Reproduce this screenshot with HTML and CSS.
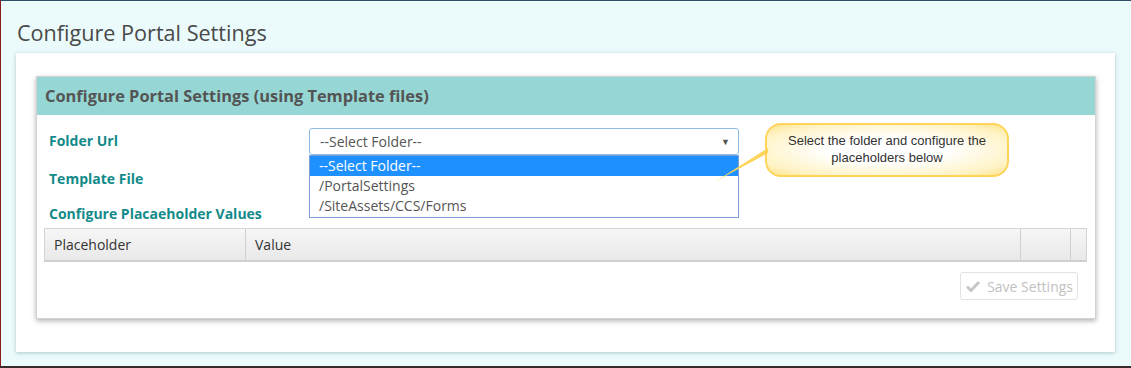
FILE: index.html
```html
<!DOCTYPE html>
<html>
<head>
	<title>Configure Portal Settings</title>
	<link rel="stylesheet" href="styles.css">
</head>
<body>
	<div class="screen">
		<h1 class="page-title">Configure Portal Settings</h1>

		<div class="card">
			<div class="panel">
				<div class="panel-head">Configure Portal Settings (using Template files)</div>
				<div class="panel-body">

					<div class="field">
						<label class="field-label">Folder Url</label>
						<div class="select-wrap">
							<div class="select">
								<span>--Select Folder--</span>
								<span class="caret">&#9660;</span>
							</div>
							<ul class="options">
								<li class="active">--Select Folder--</li>
								<li>/PortalSettings</li>
								<li>/SiteAssets/CCS/Forms</li>
							</ul>
						</div>
					</div>

					<div class="field">
						<label class="field-label">Template File</label>
					</div>

					<div class="section-label">Configure Placaeholder Values</div>

					<div class="grid-head">
						<div class="col col-name">Placeholder</div>
						<div class="col col-value">Value</div>
						<div class="col col-act"></div>
						<div class="col col-last"></div>
					</div>

					<div class="actions">
						<button class="btn" disabled>
							<svg width="14" height="12" viewBox="0 0 14 12"><path d="M1 6.5 L5 10.5 L13 2" fill="none" stroke="#c8c8c8" stroke-width="3"/></svg>
							Save Settings
						</button>
					</div>
				</div>

				<div class="callout">
					<svg class="callout-tail" width="54" height="36" viewBox="0 0 54 36"><path d="M52 2 L0 35 L52 7 Z" fill="#ffd45a"/></svg>
					Select the folder and configure the<br>placeholders below
				</div>
			</div>
		</div>
	</div>
</body>
</html>
```

FILE: styles.css
```css
body{
	margin: 0;
	background: #3a2a2a;
	font-family: "Open Sans", "Noto Sans", sans-serif;
}

.screen{
	height: 365px;
	background: #ebfbfc;
	border-left: 1px solid #8d1c1c;
	border-top: 1px solid #2d4f66;
	overflow: hidden;
}

.page-title{
	margin: 0;
	padding: 16px 0 0 16px;
	font-size: 21.6px;
	font-weight: normal;
	line-height: 32px;
	color: #4a4a4a;
}

.card{
	margin: 4px 0 0 15px;
	width: 1060px;
	height: 276px;
	padding: 23px 19px 0 20px;
	background: #fff;
	box-shadow: 0 1px 4px rgba(60,100,110,.35);
}

.panel{
	position: relative;
	height: 241px;
	border: 1px solid #d2d2d2;
	box-shadow: 0 2px 5px rgba(0,0,0,.3);
}

.panel-head{
	height: 38px;
	padding: 0 8px;
	background: #96d7d5;
	font-size: 16.4px;
	font-weight: bold;
	line-height: 38px;
	color: #545454;
}

.panel-body{
	padding: 12px 8px 0 7px;
}

.field{
	display: grid;
	grid-template-columns: 265px 430px;
	align-items: center;
	height: 27px;
	margin-bottom: 11px;
}

.field-label,
.section-label{
	padding-left: 5px;
	font-size: 14px;
	font-weight: bold;
	color: #138a8a;
}

.section-label{
	height: 22px;
	line-height: 22px;
	margin-top: 1px;
}

.select-wrap{
	position: relative;
	top: 1px;
	height: 27px;
}

.select{
	display: flex;
	justify-content: space-between;
	align-items: center;
	height: 25px;
	padding: 0 8px 0 10px;
	border: 1px solid #8cbbe8;
	border-radius: 3px;
	font-size: 14px;
	color: #555;
}

.caret{
	font-size: 9px;
	color: #555;
}

.options{
	position: absolute;
	top: 27px;
	left: 0;
	right: 0;
	margin: 0;
	padding: 0 0 1px;
	list-style: none;
	background: #fff;
	border: 1px solid #7f9fd6;
	z-index: 2;
}

.options li{
	height: 20px;
	padding-left: 9px;
	font-size: 14px;
	line-height: 20px;
	color: #555;
}

.options li.active{
	background: #1e90ff;
	color: #fff;
}

.grid-head{
	display: flex;
	height: 31px;
	margin-top: 3px;
	border: 1px solid #d4d4d4;
	border-bottom: 2px solid #cfcfcf;
	background: linear-gradient(#f6f6f6, #e9e9e9);
	font-size: 14px;
	color: #333;
}

.col{
	border-left: 1px solid #d0d0d0;
	line-height: 31px;
	padding-left: 9px;
}

.col-name{
	width: 191px;
	border-left: 0;
}

.col-value{
	width: 765px;
}

.col-act{
	width: 40px;
}

.col-last{
	flex: 1;
}

.actions{
	display: flex;
	justify-content: flex-end;
	padding: 10px 9px 0 0;
}

.btn{
	display: flex;
	align-items: center;
	gap: 7px;
	height: 28px;
	padding: 0 4px 0 5px;
	background: #fff;
	border: 1px solid #e2e2e2;
	border-radius: 3px;
	font-family: "Open Sans", "Noto Sans", sans-serif;
	font-size: 14px;
	color: #c2c2c2;
}

.callout{
	position: absolute;
	left: 728px;
	top: 46px;
	width: 244px;
	height: 54px;
	padding-top: 7px;
	box-sizing: border-box;
	border: 2px solid #ffd45a;
	border-radius: 16px;
	background: radial-gradient(ellipse at center, #ffffff 35%, #fff3c4 80%, #ffe38a 100%);
	font-family: "Liberation Sans", Arial, sans-serif;
	font-size: 13px;
	line-height: 17px;
	text-align: center;
	color: #333;
	z-index: 3;
}

.callout-tail{
	position: absolute;
	left: -51px;
	top: 21px;
}
```
